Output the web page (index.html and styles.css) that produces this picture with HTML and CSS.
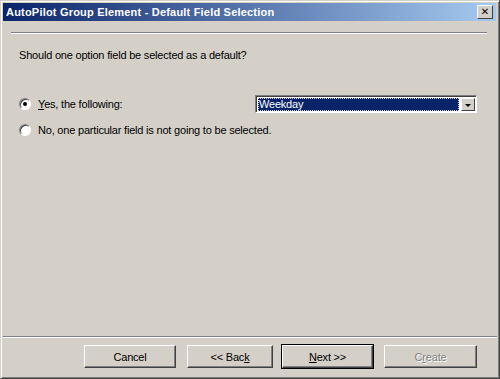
FILE: index.html
```html
<!DOCTYPE html>
<html lang="en">

<head>
    <meta charset="UTF-8">
    <title>AutoPilot Group Element - Default Field Selection</title>
    <link rel="stylesheet" href="styles.css">
</head>

<body>
    <div class="window">
        <!-- Title bar -->
        <div class="titlebar">
            <span class="title">AutoPilot Group Element - Default Field Selection</span>
            <span class="close">&#x2715;</span>
        </div>

        <div class="rule top-rule"></div>

        <!-- Page content -->
        <div class="content">
            <p class="question">Should one option field be selected as a default?</p>

            <div class="option-row">
                <label class="radio-label">
                    <span class="radio checked"></span>
                    <span><u>Y</u>es, the following:</span>
                </label>
                <div class="combo">
                    <span class="combo-value">Weekday</span>
                    <span class="combo-btn"></span>
                </div>
            </div>

            <div class="option-row">
                <label class="radio-label">
                    <span class="radio"></span>
                    <span>No, one particular field is not going to be selected.</span>
                </label>
            </div>
        </div>

        <div class="rule bottom-rule"></div>

        <!-- Buttons -->
        <div class="buttons">
            <button class="btn">Cancel</button>
            <button class="btn back">&lt;&lt; Bac<u>k</u></button>
            <button class="btn default"><u>N</u>ext &gt;&gt;</button>
            <button class="btn disabled">C<u>r</u>eate</button>
        </div>
    </div>
</body>

</html>
```

FILE: styles.css
```css
body {
    margin: 0;
    background: #d4d0c8;
    font-family: "Liberation Sans", Arial, sans-serif;
    font-size: 11px;
    letter-spacing: -0.2px;
    color: #000;
}

.window {
    width: 500px;
    height: 379px;
    box-sizing: border-box;
    border: 1px solid;
    border-color: #d4d0c8 #404040 #404040 #d4d0c8;
    box-shadow: inset 1px 1px 0 #fff, inset -1px -1px 0 #808080;
    padding: 2px 3px 2px 2px;
    display: flex;
    flex-direction: column;
}

.titlebar {
    height: 18px;
    background: linear-gradient(to right, #0a246a, #a6caf0);
    display: flex;
    align-items: center;
    justify-content: space-between;
    padding: 0 3px 0 3px;
}

.title {
    color: #fff;
    font-weight: bold;
    font-size: 11px;
    letter-spacing: 0.2px;
}

.close {
    width: 14px;
    height: 12px;
    background: #d4d0c8;
    border: 1px solid;
    border-color: #fff #404040 #404040 #fff;
    font-family: "DejaVu Sans", sans-serif;
    font-size: 10px;
    font-weight: bold;
    line-height: 12px;
    text-align: center;
    letter-spacing: 0;
}

.rule {
    height: 0;
    border-top: 1px solid #808080;
    border-bottom: 1px solid #fff;
}

.top-rule {
    margin: 11px 9px 0 8px;
}

.content {
    flex: 1;
    padding: 0 16px;
}

.question {
    margin: 15px 0 34px 0;
}

.option-row {
    display: flex;
    align-items: center;
    justify-content: space-between;
    height: 18px;
    margin-bottom: 8px;
}

.radio-label {
    display: flex;
    align-items: center;
    gap: 7px;
}

.radio {
    width: 12px;
    height: 12px;
    border-radius: 50%;
    box-sizing: border-box;
    background: #fff;
    border: 1px solid;
    border-color: #808080 #fff #fff #808080;
    box-shadow: inset 1px 1px 0 #404040;
    position: relative;
}

.radio.checked::after {
    content: "";
    position: absolute;
    left: 3px;
    top: 3px;
    width: 4px;
    height: 4px;
    border-radius: 50%;
    background: #000;
}

.combo {
    width: 222px;
    height: 18px;
    box-sizing: border-box;
    border: 1px solid;
    border-color: #808080 #fff #fff #808080;
    box-shadow: inset 1px 1px 0 #404040;
    background: #fff;
    display: flex;
    padding: 2px 1px 1px 2px;
    margin-right: 3px;
}

.combo-value {
    flex: 1;
    background: #0a246a;
    color: #fff;
    outline: 1px dotted #d4d0c8;
    outline-offset: -1px;
    line-height: 13px;
    padding-left: 1px;
}

.combo-btn {
    width: 14px;
    margin-left: 2px;
    background: #d4d0c8;
    border: 1px solid;
    border-color: #fff #404040 #404040 #fff;
    box-sizing: border-box;
    position: relative;
}

.combo-btn::after {
    content: "";
    position: absolute;
    left: 3px;
    top: 5px;
    border-left: 3px solid transparent;
    border-right: 3px solid transparent;
    border-top: 3px solid #000;
}

.bottom-rule {
    margin: 0 -1px 0 0;
}

.buttons {
    display: flex;
    justify-content: flex-end;
    gap: 11px;
    padding: 7px 19px 8px 0;
}

.btn {
    width: 92px;
    height: 23px;
    font-family: "Liberation Sans", Arial, sans-serif;
    font-size: 11px;
    letter-spacing: -0.2px;
    background: #d4d0c8;
    border: 1px solid;
    border-color: #fff #404040 #404040 #fff;
    box-shadow: inset -1px -1px 0 #808080;
    padding: 0;
}

.btn.back {
    width: 86px;
}

.btn.default {
    width: 91px;
    outline: 1px solid #000;
    margin-left: -2px;
}

.btn.disabled {
    width: 93px;
    color: #808080;
    text-shadow: 1px 1px 0 #fff;
}
```
